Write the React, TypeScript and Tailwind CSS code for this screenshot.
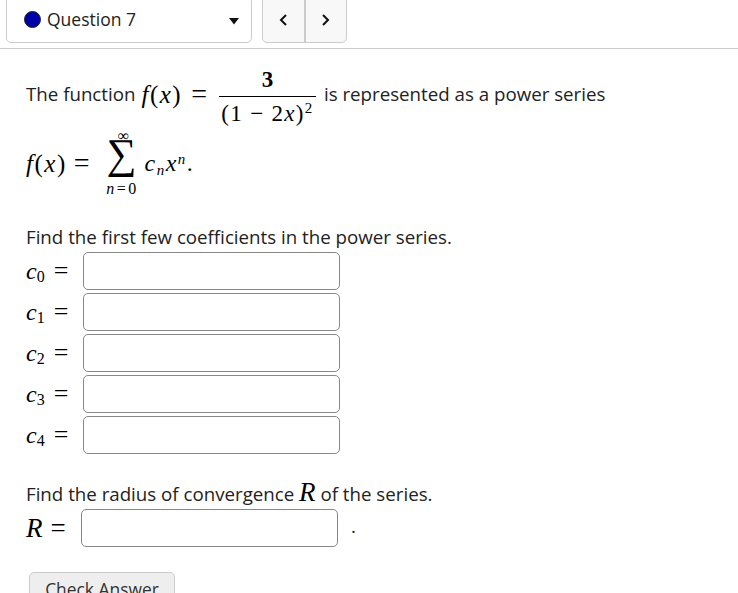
const MATH = "font-['Liberation_Serif',serif] text-black";

function Coef({ n }: { n: number }) {
  return (
    <div className="flex h-[38px] items-center">
      <div className={`${MATH} flex w-[57px] items-baseline text-[24px] italic leading-none`}>
        <span>c</span>
        <span className="relative top-[3px] text-[16px] not-italic">{n}</span>
        <span className="ml-[9px] text-[26px] not-italic">=</span>
      </div>
      <div className="h-[38px] w-[257px] rounded-[5px] border border-[#888] bg-white" />
    </div>
  );
}

export default function App() {
  return (
    <div className="h-[593px] w-[738px] overflow-hidden bg-white font-['Open_Sans',sans-serif] text-[#111]">
      <div className="flex h-[49px] items-start gap-[10px] border-b border-[#ccc] px-[6px]">
        <div className="-mt-[4px] flex h-[47px] w-[246px] items-center rounded-[5px] border border-[#ccc] bg-white pl-[17px] pr-[11px]">
          <span className="h-[17px] w-[17px] rounded-full border border-[#222] bg-[#0000a8]" />
          <span className="ml-[6px] flex-1 text-[17.5px] text-[#222]">Question 7</span>
          <svg width="12" height="8" viewBox="0 0 12 8" className="mt-[3px]">
            <path d="M1 1h10L6 7.5z" fill="#111" />
          </svg>
        </div>
        <div className="-mt-[4px] flex h-[47px] w-[85px] rounded-[5px] border border-[#ccc] bg-[#f8f8f8]">
          <div className="flex flex-1 items-center justify-center border-r-2 border-[#ccc]">
            <svg width="10" height="14" viewBox="0 0 10 14" fill="none" stroke="#111" strokeWidth="2">
              <path d="M8 2L3 7l5 5" />
            </svg>
          </div>
          <div className="flex flex-1 items-center justify-center">
            <svg width="10" height="14" viewBox="0 0 10 14" fill="none" stroke="#111" strokeWidth="2">
              <path d="M2 2l5 5-5 5" />
            </svg>
          </div>
        </div>
      </div>

      <div className="pl-[26px]">
        <div className="mt-[19px] flex h-[56px] items-center text-[18.72px] text-[#222]">
          <span className="mb-[4px]">The function</span>
          <span className={`${MATH} mb-[4px] ml-[6px] text-[25px] leading-none tracking-[1.5px]`}>
            <i>f</i>(<i>x</i>)
          </span>
          <span className={`${MATH} mb-[4px] ml-[9px] text-[28px] leading-none`}>=</span>
          <div className={`${MATH} ml-[12px] flex w-[97px] flex-col items-center text-[23px] leading-none`}>
            <span className="pb-[5px] font-bold">3</span>
            <div className="h-px w-full bg-black" />
            <span className="whitespace-nowrap pt-[5px] tracking-[1.3px]">
              (1 − 2<i>x</i>)<sup className="text-[15px]">2</sup>
            </span>
          </div>
          <span className="mb-[4px] ml-[8px]">is represented as a power series</span>
        </div>

        <div className="mt-[5px] flex h-[68px] items-center">
          <span className={`${MATH} text-[25px] leading-none tracking-[1.5px]`}>
            <i>f</i>(<i>x</i>)
          </span>
          <span className={`${MATH} ml-[7px] text-[28px] leading-none`}>=</span>
          <div className={`${MATH} ml-[14px] flex w-[36px] flex-col items-center leading-none`}>
            <span className="ml-[4px] text-[16px] leading-[12px]">∞</span>
            <span className="relative -top-[5px] text-[42px] leading-[34px]">∑</span>
            <span className="ml-[2px] whitespace-nowrap pt-[6px] text-[16px] leading-[14px] tracking-[2.5px]">
              <i>n</i>=0
            </span>
          </div>
          <span className={`${MATH} ml-[5px] text-[24px] italic leading-none tracking-[1.5px]`}>
            c<sub className="text-[15px]">n</sub>x<sup className="text-[15px]">n</sup>
            <span className="not-italic">.</span>
          </span>
        </div>

        <p className="mt-[27px] text-[18.72px] leading-[26px] text-[#222]">
          Find the first few coefficients in the power series.
        </p>
        <div className="mt-[2px] flex flex-col gap-[3px]">
          {[0, 1, 2, 3, 4].map((n) => (
            <Coef key={n} n={n} />
          ))}
        </div>

        <p className="mt-[27px] text-[18.72px] leading-[26px] text-[#222]">
          Find the radius of convergence <i className={`${MATH} text-[27px] leading-[0]`}>R</i> of the series.
        </p>
        <div className="mt-[2px] flex h-[38px] items-center">
          <span className={`${MATH} flex w-[55px] items-baseline text-[27px] leading-none`}>
            <i>R</i>
            <span className="ml-[8px]">=</span>
          </span>
          <div className="h-[38px] w-[257px] rounded-[5px] border border-[#888] bg-white" />
          <span className="mb-[4px] ml-[13px] text-[18.72px] text-[#222]">.</span>
        </div>

        <div className="ml-[3px] mt-[25px] flex h-[40px] w-[146px] justify-center rounded-[5px] border border-[#ccc] bg-[#eee] pt-[3px] text-[17.4px] text-[#333]">
          Check Answer
        </div>
      </div>
    </div>
  );
}
